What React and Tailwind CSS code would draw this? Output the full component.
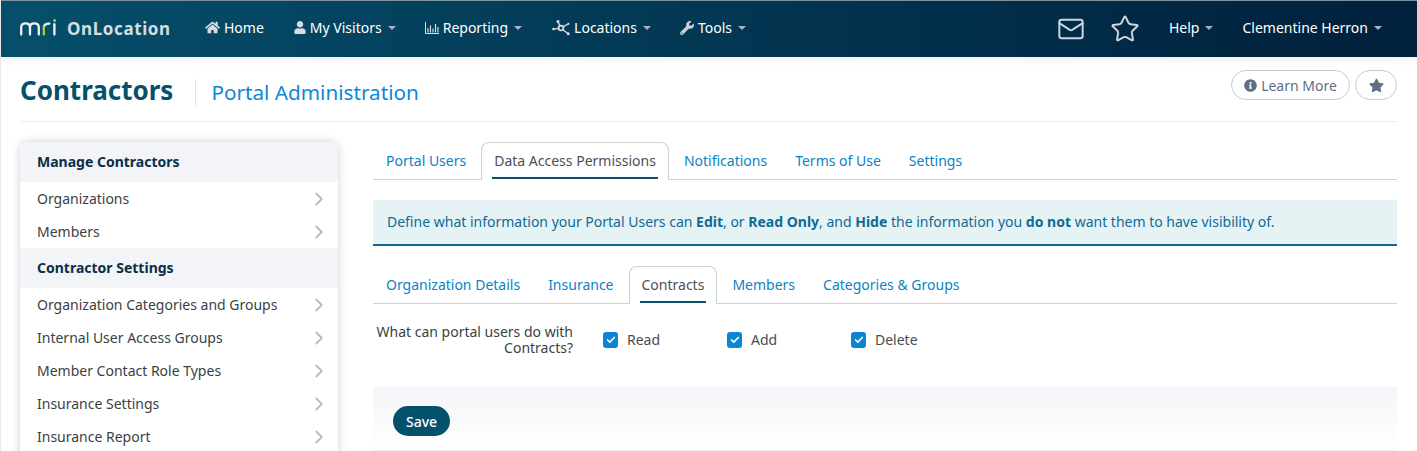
import { ChevronRight, Mail, Star, Check } from 'lucide-react'
import { FaHome, FaUser, FaWrench, FaInfoCircle, FaStar } from 'react-icons/fa'

function Caret() {
    return <span className="ml-[6px] mt-[1px] w-0 h-0 border-x-[4px] border-x-transparent border-t-[4px] border-t-[#a9b4bf]" />
}

function NetworkIcon() {
    return (
        <svg width="18" height="16" viewBox="0 0 18 16" fill="none" stroke="#d5dce2" strokeWidth="1.4">
            <circle cx="9" cy="8" r="2.4" strokeWidth="1.8" />
            <line x1="6.6" y1="8.4" x2="2" y2="9" />
            <line x1="8" y1="5.8" x2="6" y2="2" />
            <line x1="11" y1="6.8" x2="16" y2="4" />
            <line x1="10.8" y1="9.8" x2="16" y2="13.5" />
            <circle cx="1.4" cy="9" r="1.2" fill="#d5dce2" stroke="none" />
            <circle cx="6" cy="1.6" r="1.5" fill="#d5dce2" stroke="none" />
            <circle cx="16.4" cy="3.8" r="1.1" fill="#d5dce2" stroke="none" />
            <circle cx="16.2" cy="13.8" r="1.5" fill="#d5dce2" stroke="none" />
        </svg>
    )
}

function ChartIcon() {
    return (
        <svg width="14" height="12" viewBox="0 0 14 12" fill="none" stroke="#d5dce2" strokeWidth="1">
            <path d="M0.5 0V11.5H14" />
            <path d="M3 10.5V6M5.5 10.5V3.5M8 10.5V6.5M10.5 10.5V2M13 10.5V5" strokeWidth="1.2" />
        </svg>
    )
}

function Logo() {
    return (
        <svg width="37" height="17" viewBox="0 0 37 17" fill="none" strokeWidth="2.3" strokeLinecap="round">
            <path d="M1.2 15.6V8.5C1.2 5.6 3 4.4 5.4 4.4S10 5.6 10 8.5V15.6M10 8.5C10 5.6 11.8 4.4 14.2 4.4S18.8 5.6 18.8 8.5V15.6" stroke="#eef3f5" />
            <path d="M23.8 8.8C23.8 5.8 25.8 4.6 29.4 4.6" stroke="#eef3f5" />
            <path d="M23.8 8V15.6" stroke="#a6ce39" />
            <path d="M34.4 5.2V15.6" stroke="#eef3f5" />
            <circle cx="34.6" cy="1.6" r="1.5" fill="#a6ce39" stroke="none" />
        </svg>
    )
}

function NavItem({ icon, label, caret = true, className = '' }) {
    return (
        <div className={`flex items-center text-[14px] text-white ${className}`}>
            {icon}
            <span>{label}</span>
            {caret && <Caret />}
        </div>
    )
}

function Header() {
    return (
        <header className="h-[57px] border-t border-t-[#7d929e] bg-gradient-to-r from-[#064f6b] to-[#01203c] flex items-center pb-[3px] shadow-[0_2px_8px_rgba(0,0,0,0.08)] relative">
            <div className="ml-[19px] flex items-center w-[185px]">
                <Logo />
                <span className="ml-[10px] mt-[2px] text-[17px] font-bold tracking-[0.6px] text-[#d3dde2]">OnLocation</span>
            </div>
            <NavItem icon={<FaHome className="w-[15px] h-[15px] mr-[4px] text-[#d5dce2]" />} label="Home" caret={false} />
            <NavItem className="ml-[30px]" icon={<FaUser className="w-[12px] h-[13px] mr-[4px] text-[#d5dce2]" />} label="My Visitors" />
            <NavItem className="ml-[29px]" icon={<span className="mr-[4px] flex"><ChartIcon /></span>} label="Reporting" />
            <NavItem className="ml-[30px]" icon={<span className="mr-[4px] flex"><NetworkIcon /></span>} label="Locations" />
            <NavItem className="ml-[29px]" icon={<FaWrench className="w-[14px] h-[14px] mr-[4px] text-[#c9d1d7]" />} label="Tools" />
            <div className="ml-auto flex items-center">
                <Mail className="w-[28px] h-[28px] text-[#ccd5db] mt-[3px]" strokeWidth={1.7} />
                <Star className="ml-[25px] w-[30px] h-[30px] text-[#ccd5db] mt-[3px]" strokeWidth={1.6} />
                <NavItem className="ml-[29px]" label="Help" />
                <NavItem className="ml-[29px] mr-[35px]" label="Clementine Herron" />
            </div>
        </header>
    )
}

function SideHead({ children }) {
    return <div className="h-[40px] bg-[#f3f4f8] px-[17px] pb-[2px] flex items-center text-[14px] font-bold text-[#0b2f47]">{children}</div>
}

function SideItem({ children }) {
    return (
        <div className="h-[33px] pl-[17px] pr-[8px] flex items-center justify-between text-[14px] text-[#3b3f43]">
            <span>{children}</span>
            <ChevronRight className="w-[22px] h-[22px] text-[#b9bcbf]" strokeWidth={2} />
        </div>
    )
}

function Sidebar() {
    return (
        <aside className="w-[318px] shrink-0 rounded-t-[8px] overflow-hidden shadow-[0_0_10px_rgba(0,0,0,0.18)] bg-white h-[320px]">
            <SideHead>Manage Contractors</SideHead>
            <SideItem>Organizations</SideItem>
            <SideItem>Members</SideItem>
            <SideHead>Contractor Settings</SideHead>
            <SideItem>Organization Categories and Groups</SideItem>
            <SideItem>Internal User Access Groups</SideItem>
            <SideItem>Member Contact Role Types</SideItem>
            <SideItem>Insurance Settings</SideItem>
            <SideItem>Insurance Report</SideItem>
        </aside>
    )
}

function Tabs({ items, active, activeMargin }) {
    return (
        <div className="flex border-b border-[#c8d3d9] h-[38px]">
            {items.map(t => t === active ? (
                <div key={t} className={`h-[38px] border border-b-0 border-[#c8d3d9] rounded-t-[8px] bg-white px-[10px] flex flex-col items-center ${activeMargin}`}>
                    <span className="flex-1 flex items-center px-[2px] text-[14px] text-[#4c4f53]">{t}</span>
                    <span className="block w-full h-[2px] bg-[#05506c] mb-[1px]" />
                </div>
            ) : (
                <div key={t} className="px-[14px] first:ml-[-1px] flex items-center text-[14px] text-[#0b83c5] pb-[1px]">{t}</div>
            ))}
        </div>
    )
}

function CheckItem({ label }) {
    return (
        <div className="w-[124px] flex items-center text-[14px] text-[#4a4d50]">
            <span className="w-[15px] h-[16px] rounded-[3px] bg-[#0a86d3] flex items-center justify-center">
                <Check className="w-[10px] h-[10px] text-white" strokeWidth={4} />
            </span>
            <span className="ml-[9px] pb-[2px]">{label}</span>
        </div>
    )
}

function Main() {
    return (
        <main className="ml-[35px] flex-1 min-w-0">
            <Tabs items={['Portal Users', 'Data Access Permissions', 'Notifications', 'Terms of Use', 'Settings']} active="Data Access Permissions" activeMargin="mx-[1px]" />
            <div className="mt-[20px] h-[46px] bg-[#e6f3f5] border-b-2 border-[#0f6a96] px-[14px] pb-[2px] flex items-center text-[14px] text-[#0f6a96] whitespace-pre">
                Define what information your Portal Users can <b>Edit</b>, or <b>Read Only</b>, and <b>Hide</b> the information you <b>do not</b> want them to have visibility of.
            </div>
            <div className="mt-[20px]">
                <Tabs items={['Organization Details', 'Insurance', 'Contracts', 'Members', 'Categories & Groups']} active="Contracts" activeMargin="mx-[1px]" />
            </div>
            <div className="mt-[20px] flex items-center">
                <div className="w-[200px] text-right text-[14px] leading-[16px] text-[#3b3f43]">What can portal users do with Contracts?</div>
                <div className="ml-[30px] flex">
                    <CheckItem label="Read" />
                    <CheckItem label="Add" />
                    <CheckItem label="Delete" />
                </div>
            </div>
            <div className="mt-[31px] h-[64px] bg-gradient-to-b from-[#f4f5f8] to-white border-b border-[#eef0f2] pl-[20px] pt-[19px]">
                <button className="w-[57px] h-[30px] rounded-full bg-[#05506c] text-white text-[14px] font-medium">Save</button>
            </div>
        </main>
    )
}

export default function App() {
    return (
        <div className="w-[1417px] h-[451px] overflow-hidden bg-white border-l border-[#e8eaec] font-['Noto_Sans',sans-serif]">
            <Header />
            <div className="px-[19px] pr-[20px]">
                <div className="h-[65px] border-b border-[#edeef0] flex items-start">
                    <h1 className="mt-[20px] text-[26px] font-bold text-[#05506c] leading-[26px]">Contractors</h1>
                    <div className="mt-[22px] ml-[22px] pl-[15px] border-l border-[#e4e6e8] h-[28px] flex items-center text-[20.7px] text-[#0b87d9]">Portal Administration</div>
                    <div className="mt-[13px] ml-auto flex items-center gap-[5px]">
                        <div className="h-[30px] w-[119px] rounded-full border border-[#c0ccd3] flex items-center justify-center text-[14px] text-[#5f6f86]">
                            <FaInfoCircle className="w-[13px] h-[13px] mr-[4px]" />Learn More
                        </div>
                        <div className="h-[30px] w-[42px] rounded-full border border-[#c0ccd3] flex items-center justify-center text-[#5f6f86]">
                            <FaStar className="w-[15px] h-[15px]" />
                        </div>
                    </div>
                </div>
                <div className="mt-[20px] flex">
                    <Sidebar />
                    <Main />
                </div>
            </div>
        </div>
    )
}
